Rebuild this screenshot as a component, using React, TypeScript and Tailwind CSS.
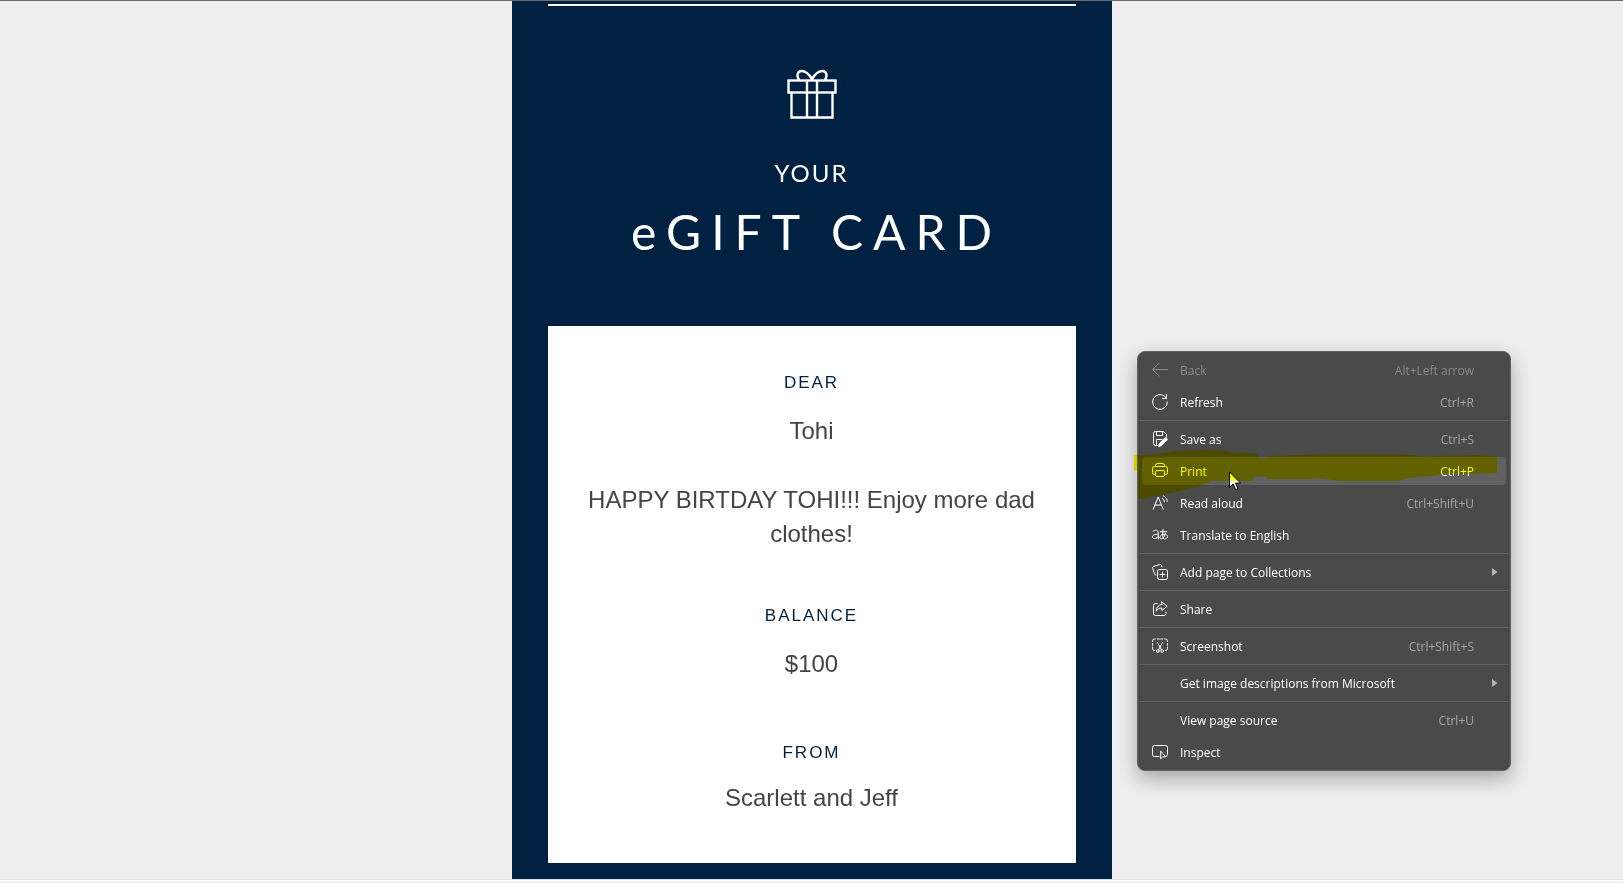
import React from 'react';

type MenuItem = {
  label: string;
  shortcut?: string;
  icon?: React.ReactNode;
  submenu?: boolean;
  disabled?: boolean;
  active?: boolean;
};

const Icon = ({ children }: { children: React.ReactNode }) => (
  <svg
    viewBox="0 0 16 16"
    className="size-4"
    fill="none"
    stroke="currentColor"
    strokeWidth="1"
    strokeLinecap="round"
    strokeLinejoin="round"
    aria-hidden="true"
  >
    {children}
  </svg>
);

const BackIcon = () => (
  <Icon>
    <path d="M15.5 7.5H.7M7.3.9.7 7.5l6.6 6.6" />
  </Icon>
);

const RefreshIcon = () => (
  <Icon>
    <path d="M15.4 8A7.4 7.4 0 1 1 12.6 2.2L14.4 4" />
    <path d="M14.5.5V4.5H10.5" />
  </Icon>
);

const SaveAsIcon = () => (
  <Icon>
    <path d="M5.5 14.5H3.5a2 2 0 0 1-2-2v-10a2 2 0 0 1 2-2h8l3 3v2.5" />
    <path d="M4.5.5v4h6v-4" />
    <path d="M4.5 14V8.5h5.5" />
    <path d="M6.6 15.3l.8-2.9 5.2-5.1a1.4 1.4 0 0 1 2.1 2.1l-5.2 5.1z" fill="currentColor" />
  </Icon>
);

const PrintIcon = () => (
  <Icon>
    <path d="M3.5 3.5V2.5a2 2 0 0 1 2-2h5a2 2 0 0 1 2 2v1" />
    <path d="M3.5 11.5H2.5a2 2 0 0 1-2-2v-4a2 2 0 0 1 2-2h11a2 2 0 0 1 2 2v4a2 2 0 0 1-2 2h-1" />
    <rect x="3.5" y="7.5" width="9" height="6" rx="1.5" />
  </Icon>
);

const ReadAloudIcon = () => (
  <Icon>
    <path d="M1.2 14.2 6.2 2l5 12.2M2.9 10h6.6" />
    <path d="M10.3 3.5c1.2.8 1.9 1.8 2.1 3.3" />
    <path d="M11.6.9c2.2 1.2 3.4 3 3.7 5.6" />
  </Icon>
);

const TranslateIcon = () => (
  <Icon>
    <path d="M1 4.3C3.4 2.2 6.3 3 6.3 6v5.8M6.3 7.3C3.2 7.2.5 7.8.5 9.8c0 2.7 4.3 2.4 5.8-.5" />
    <path d="M8.3 4.7h6.5M11 2.5c-.6 3.2-.4 6.5.4 9.2M13.5 6.2c-.6 3.1-2.7 5.9-4.6 5.7-2.2-.4-.6-4.7 3.2-4.7 4.7 0 4.2 4.8.6 4.8" />
  </Icon>
);

const CollectionsIcon = () => (
  <Icon>
    <path d="M3.8 11.1C2.6 11 2.4 10 2.2 9L.7 4.4c-.3-1 .1-1.8 1.1-2.1L7.5.6c1-.3 1.8.1 2.1 1.1l.4 1.2" />
    <rect x="5.5" y="5.5" width="10" height="10" rx="2" />
    <path d="M10.5 8v5M8 10.5h5" />
  </Icon>
);

const ShareIcon = () => (
  <Icon>
    <path d="M5 2.5H3.5a2 2 0 0 0-2 2v8a2 2 0 0 0 2 2h8.5a2 2 0 0 0 2-2V11" />
    <path d="M9.8.9l5.4 4.4-5.4 4.2V7C7.3 6.9 5.5 7.9 4.2 10.2 4.5 6.3 6.3 3.8 9.8 3.4z" />
  </Icon>
);

const ScreenshotIcon = () => (
  <Icon>
    <path d="M.5 3.5V3a2 2 0 0 1 2-2h.8M5.3 1h2M8.8 1h2M12.7 1h.8a2 2 0 0 1 2 2v.5M.5 5.5v1.8M15.5 5.5v1.8M.5 9.3v1.2a2 2 0 0 0 2 2M15.5 9.3v1.2a2 2 0 0 1-2 2" />
    <path d="m5.3 4.3 4.2 7.6M10.7 4.3l-4.2 7.6" />
    <circle cx="5.8" cy="13" r="1.4" />
    <circle cx="10.2" cy="13" r="1.4" />
  </Icon>
);

const InspectIcon = () => (
  <Icon>
    <path d="M7 12.5H2.5a2 2 0 0 1-2-2v-7a2 2 0 0 1 2-2h11a2 2 0 0 1 2 2v7a2 2 0 0 1-1.2 1.8" />
    <path d="M8.7 7.5v7.3l2-1.9h2.8z" />
  </Icon>
);

const GiftIcon = () => (
  <svg
    viewBox="0 0 50 50"
    className="size-[50px]"
    fill="none"
    stroke="currentColor"
    strokeWidth="2.4"
    aria-hidden="true"
  >
    <rect x="1.5" y="11.5" width="47" height="12" />
    <path d="M4.5 23.5v25h41v-25" />
    <path d="M20 11.5v37M30 11.5v37" />
    <path d="M12.3 11C9 7 10.5 2 14.8 2 19 2 22.5 6 25 10c2.5-4 6-8 10.2-8C39.5 2 41 7 37.7 11" />
  </svg>
);

const groups: MenuItem[][] = [
  [
    { label: 'Back', shortcut: 'Alt+Left arrow', icon: <BackIcon />, disabled: true },
    { label: 'Refresh', shortcut: 'Ctrl+R', icon: <RefreshIcon /> },
  ],
  [
    { label: 'Save as', shortcut: 'Ctrl+S', icon: <SaveAsIcon /> },
    { label: 'Print', shortcut: 'Ctrl+P', icon: <PrintIcon />, active: true },
    { label: 'Read aloud', shortcut: 'Ctrl+Shift+U', icon: <ReadAloudIcon /> },
    { label: 'Translate to English', icon: <TranslateIcon /> },
  ],
  [{ label: 'Add page to Collections', icon: <CollectionsIcon />, submenu: true }],
  [{ label: 'Share', icon: <ShareIcon /> }],
  [{ label: 'Screenshot', shortcut: 'Ctrl+Shift+S', icon: <ScreenshotIcon /> }],
  [{ label: 'Get image descriptions from Microsoft', submenu: true }],
  [
    { label: 'View page source', shortcut: 'Ctrl+U' },
    { label: 'Inspect', icon: <InspectIcon /> },
  ],
];

const MenuRow = ({ item }: { item: MenuItem }) => (
  <li role="none" className="px-[3px] py-0.5">
    <button
      type="button"
      role="menuitem"
      disabled={item.disabled}
      className={`flex h-7 w-full items-center rounded-sm pl-2.5 pr-2 text-left ${
        item.active ? 'bg-[#616161]' : ''
      } ${item.disabled ? 'text-[#8a8a8a]' : 'text-white'}`}
    >
      <span className="mr-3 size-4 shrink-0">{item.icon}</span>
      <span className="flex-1 whitespace-nowrap pt-0.5">{item.label}</span>
      {item.shortcut && (
        <span className={item.disabled || item.active ? 'pt-0.5' : 'pt-0.5 text-[#a6a6a6]'}>
          {item.shortcut}
        </span>
      )}
      <span className="flex w-6 justify-end">
        {item.submenu && (
          <svg viewBox="0 0 6 8" className="h-2 w-1.5 fill-[#b5b5b5]" aria-hidden="true">
            <path d="M0 0l5.5 4L0 8z" />
          </svg>
        )}
      </span>
    </button>
  </li>
);

const ContextMenu = () => (
  <div
    role="menu"
    className="absolute left-[1137px] top-[350px] w-[374px] rounded-lg border border-[#636363] bg-[#4a4a4a] py-0.5 font-['Open_Sans',sans-serif] text-xs shadow-[0_8px_20px_rgba(0,0,0,0.3)]"
  >
    {groups.map((group, i) => (
      <ul
        key={group[0].label}
        role="group"
        className={i > 0 ? 'mx-px mt-0.5 border-t border-[#636363] pt-0.5' : 'mx-px'}
      >
        {group.map((item) => (
          <MenuRow key={item.label} item={item} />
        ))}
      </ul>
    ))}
  </div>
);

const Cursor = () => (
  <svg viewBox="0 0 12 19" className="absolute left-[1229px] top-[470px] h-[19px] w-3" aria-hidden="true">
    <path d="M.5.8v15.7l3.7-3.5 2.4 5.5 2.3-1-2.4-5.4h5z" fill="#fff" stroke="#000" />
  </svg>
);

// Marker strokes drawn over the Print row
const Highlighter = () => (
  <svg
    viewBox="0 0 364 52"
    className="pointer-events-none absolute left-[1134px] top-[447px] h-[52px] w-[364px] fill-[#ffff00] mix-blend-multiply"
    aria-hidden="true"
  >
    <path d="M0 7H6L21 6 34 4 54 2H86L96 4 111 5 124 6V10H133L134 8 163 7 196 6H252L278 7 295 9 299 8 343 7 359 8 363 9V25L333 26H308L298 28 273 30 265 33H206L183 30 176 31H133V28L119 29V33H78L68 37 46 43 29 47 8 51 4 50V23H0z" />
  </svg>
);

const Label = ({ children }: { children: React.ReactNode }) => (
  <h2 className="text-[17px] leading-6 tracking-[2px] text-[#002142]">{children}</h2>
);

const Value = ({ children }: { children: React.ReactNode }) => (
  <p className="text-2xl leading-[34px] text-[#444]">{children}</p>
);

const App: React.FC = () => {
  return (
    <div className="relative min-h-screen border-t border-[#6b6b6b] bg-[#eee] font-['Liberation_Sans',Arial,sans-serif]">
      <main className="mx-auto w-full max-w-[600px] bg-[#002142] px-9 pb-4 pt-[3px] text-center">
        <header className="flex flex-col items-center border-t-2 border-white pb-16 pt-[63px] font-['Lato',sans-serif] text-white">
          <GiftIcon />
          <h1 className="mt-[38px] flex flex-col">
            <span className="text-2xl leading-8 tracking-[2px]">YOUR</span>
            <span className="mt-[13px] pl-2.5 text-5xl leading-[60px] tracking-[10px]">eGIFT CARD</span>
          </h1>
        </header>
        <section className="bg-white px-9 pb-12 pt-[45px]">
          <Label>DEAR</Label>
          <div className="mt-[19px]">
            <Value>Tohi</Value>
          </div>
          <div className="mt-[35px]">
            <Value>HAPPY BIRTDAY TOHI!!! Enjoy more dad clothes!</Value>
          </div>
          <div className="mt-[53px]">
            <Label>BALANCE</Label>
          </div>
          <div className="mt-[19px]">
            <Value>$100</Value>
          </div>
          <div className="mt-[60px]">
            <Label>FROM</Label>
          </div>
          <div className="mt-4">
            <Value>Scarlett and Jeff</Value>
          </div>
        </section>
      </main>
      <footer className="h-1 border-t border-[#dedede] bg-[#f0f0f0]">
        <div className="h-px bg-white" />
      </footer>
      <ContextMenu />
      <Cursor />
      <Highlighter />
    </div>
  );
};

export default App;
